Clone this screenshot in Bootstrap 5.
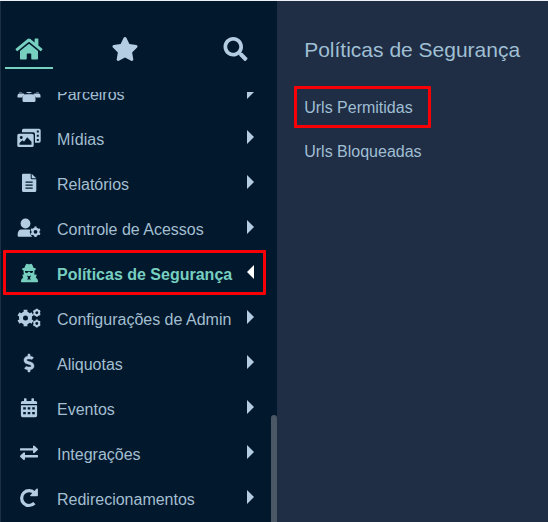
<!DOCTYPE html>
<html lang="pt-BR">
<head>
<meta charset="utf-8">
<meta name="viewport" content="width=device-width, initial-scale=1">
<title>Políticas de Segurança</title>
<link href="https://cdn.jsdelivr.net/npm/bootstrap@5.3.0/dist/css/bootstrap.min.css" rel="stylesheet">
<style>
  :root { --ink: #b5cde3; --teal: #77cfc0; --night: #02182c; --slate: #1f2d45; --alert: #f80006; }
  body { font-family: "Liberation Sans", Arial, sans-serif; font-size: 16px; line-height: 20px; color: #a3bfd1; background: var(--slate); border-top: 1px solid #eef1f4; }
  .side { flex: 0 0 277px; background: var(--night); border-left: 1px solid #1c2f45; }
  .tabs { height: 91px; padding: 25px 18px 0 4px; }
  .tab-btn { width: 48px; height: 43px; padding: 0; border: 0; border-bottom: 2px solid transparent; background: none; color: var(--ink); }
  .tab-btn.on { color: var(--teal); border-color: var(--teal); }
  .tab-btn svg { display: block; margin: 4px auto 0; height: 24px; }
  .scroller { min-height: 0; }
  .menu { margin-top: -22px; padding: 0 11px 0 2px; }
  .menu-btn { height: 45px; padding: 0 12px 0 13px; gap: 15px; border: 0; background: none; color: inherit; white-space: nowrap; }
  .menu-btn > svg { flex: none; width: 26px; height: 20px; color: var(--ink); }
  .menu-btn.on { color: var(--teal); font-weight: 700; outline: 3px solid var(--alert); outline-offset: -3px; border-radius: 1px; }
  .menu-btn.on > svg { color: var(--teal); }
  .tri { flex: none; border: solid transparent; border-width: 7px 0 7px 7px; border-left-color: var(--ink); margin-bottom: 2px; }
  .menu-btn.on .tri { border-width: 7px 7px 7px 0; border-right-color: #fff; }
  .thumb { width: 6px; top: 323px; right: 0; background: #4a5866; border-radius: 3px 3px 0 0; }
  .panel { padding: 34px 17px; color: #9fbfd3; }
  .panel h1 { font-size: 21px; line-height: 30px; margin: 0 0 21px 10px; }
  .sub { padding: 9px 15px 7px 7px; border: 3px solid transparent; color: inherit; text-decoration: none; border-radius: 1px; margin-bottom: 2px; }
  .sub.on { border-color: var(--alert); }
</style>
<script src="https://cdn.jsdelivr.net/npm/bootstrap@5.3.0/dist/js/bootstrap.bundle.min.js"></script>
</head>
<body>
<div class="d-flex vh-100 overflow-hidden">
  <aside class="side d-flex flex-column">
    <div class="tabs d-flex flex-shrink-0">
      <button class="tab-btn on" type="button" aria-label="Início"><svg viewBox="0 0 576 512" width="28" fill="currentColor"><path d="M280.37 148.26L96 300.11V464a16 16 0 0 0 16 16l112.06-.29a16 16 0 0 0 15.92-16V368a16 16 0 0 1 16-16h64a16 16 0 0 1 16 16v95.64a16 16 0 0 0 16 16.05L464 480a16 16 0 0 0 16-16V300L295.67 148.26a12.19 12.19 0 0 0-15.3 0zM571.6 251.47L488 182.56V44.05a12 12 0 0 0-12-12h-56a12 12 0 0 0-12 12v72.61L318.47 43a48 48 0 0 0-61 0L4.34 251.47a12 12 0 0 0-1.6 16.9l25.5 31A12 12 0 0 0 45.15 301l235.22-193.74a12.19 12.19 0 0 1 15.3 0L530.9 301a12 12 0 0 0 16.9-1.6l25.5-31a12 12 0 0 0-1.7-16.93z"/></svg></button>
      <button class="tab-btn ms-5" type="button" aria-label="Favoritos"><svg viewBox="0 0 576 512" width="28" fill="currentColor"><path d="M259.3 17.8L194 150.2 47.9 171.5c-26.2 3.8-36.7 36.1-17.7 54.6l105.7 103-25 145.5c-4.5 26.3 23.2 46 46.4 33.7L288 439.6l130.7 68.7c23.2 12.2 50.9-7.4 46.4-33.7l-25-145.5 105.7-103c19-18.5 8.5-50.8-17.7-54.6L382 150.2 316.7 17.8c-11.7-23.6-45.6-23.9-57.4 0z"/></svg></button>
      <button class="tab-btn ms-auto" type="button" aria-label="Buscar"><svg viewBox="0 0 512 512" width="25" fill="currentColor"><path d="M505 442.7L405.3 343c-4.5-4.5-10.6-7-17-7H372c27.6-35.3 44-79.7 44-128C416 93.1 322.9 0 208 0S0 93.1 0 208s93.1 208 208 208c48.3 0 92.7-16.4 128-44v16.3c0 6.4 2.5 12.5 7 17l99.7 99.7c9.4 9.4 24.6 9.4 33.9 0l28.3-28.3c9.4-9.4 9.4-24.6.1-34zM208 336c-70.7 0-128-57.2-128-128 0-70.7 57.2-128 128-128 70.7 0 128 57.2 128 128 0 70.7-57.2 128-128 128z"/></svg></button>
    </div>
    <nav class="scroller flex-grow-1 overflow-hidden position-relative" aria-label="Menu">
      <ul class="menu list-unstyled mb-0">
        <li><button class="menu-btn w-100 d-flex align-items-center" type="button"><svg viewBox="0 0 26 20" fill="currentColor"><circle cx="4.500" cy="7" r="2.500"/><circle cx="21.500" cy="7" r="2.500"/><circle cx="13" cy="6" r="4.300"/><path d="M1.500 14.500v-2q0-2 2-2h3.500q1.200 0 1.700.7Q6.500 12.500 6.200 14.500zM24.500 14.500v-2q0-2-2-2H19q-1.200 0-1.700.7 2.200 1.300 2.500 3.300zM6.500 17v-1.500q0-4.300 4-4.300h5q4 0 4 4.300V17.700q0 1.300-1.300 1.300H7.800Q6.500 19 6.500 17.700z"/></svg><span class="pt-1 me-auto">Parceiros</span><i class="tri"></i></button></li>
        <li><button class="menu-btn w-100 d-flex align-items-center" type="button"><svg viewBox="0 0 26 20" fill="currentColor" fill-rule="evenodd"><path d="M7.500 0.800h15.500q1.700 0 1.700 1.700v10.500q0 1.700-1.700 1.700h-4V6q0-1.700-1.700-1.700H6V2.300Q6 .8 7.500.8zM20.800 2.600v2h2v-2zm0 4.200v2h2v-2zm0 4.200v2h2v-2z"/><path d="M3 5.700h13q1.700 0 1.700 1.700v10q0 1.700-1.700 1.700H3q-1.700 0-1.700-1.700v-10Q1.300 5.700 3 5.700zM5.200 8a1.500 1.500 0 1 0 .1 0zM3.500 16.800h12v-3l-4.300-4.600L8 13.700l-1.500-1.500-3 2.800z"/></svg><span class="pt-1 me-auto">Mídias</span><i class="tri"></i></button></li>
        <li><button class="menu-btn w-100 d-flex align-items-center" type="button"><svg viewBox="0 0 26 20" fill="currentColor" fill-rule="evenodd"><path d="M7 .8h7.700V5q0 1.300 1.200 1.300h4.400V17.500q0 1.500-1.500 1.500H7.500Q6 19 6 17.500V2Q6 .8 7 .8zM9.500 8.400v1.400h7.200V8.400zm0 3v1.400h7.200v-1.400zm0 3v1.400h7.200v-1.400zM15.700 .8l4.600 4.500h-4.600z"/></svg><span class="pt-1 me-auto">Relatórios</span><i class="tri"></i></button></li>
        <li><button class="menu-btn w-100 d-flex align-items-center" type="button"><svg viewBox="0 0 26 20" fill="currentColor"><circle cx="9.500" cy="5.500" r="4.900"/><path d="M5.500 11.500h7.500q1.300 0 1.300.5-1.300 2.200.2 4.500.8 1.500 1.800 2.300H3Q1.600 18.800 1.600 17.300 1.600 11.500 5.500 11.500z"/><circle cx="19.500" cy="13.800" r="3" fill="none" stroke="currentColor" stroke-width="2.200"/><path d="M19.500 8.600v2M19.500 17v2M15 11.200l1.800 1M22.200 15.400l1.800 1M15 16.400l1.800-1M22.200 12.200l1.800-1" stroke="currentColor" stroke-width="2.200"/></svg><span class="pt-1 me-auto">Controle de Acessos</span><i class="tri"></i></button></li>
        <li><button class="menu-btn on w-100 d-flex align-items-center" type="button"><svg viewBox="0 0 26 20" fill="currentColor" fill-rule="evenodd"><path d="M10.300 .9q.8-.5 1.500 0 1.200.6 2.400 0 .7-.5 1.500 0 1.300 1.500 1.800 3.900 2.500.5 2.500 1.300 0 .8-1.500 1.300.1 3-.4 4h1.900q.8.200.6.900l-.8 2.200q2.300 1.300 2.300 4 0 .7-.8.700H5.700q-.8 0-.8-.7 0-2.700 2.300-4l-.8-2.200q-.2-.7.600-.9h1Q7.500 10.400 7.500 7.400 6 6.900 6 6.100q0-.8 2.500-1.300Q9 2.400 10.300.9zM9 8v.8q.3 1.200 1.600 1.200 1.300 0 1.700-1.200h1.400q.4 1.200 1.700 1.200 1.300 0 1.600-1.200V8zM10.800 12.600l1.200 2-.6 3 1.600-1.700 1.600 1.700-.6-3 1.200-2-2.200.7z"/></svg><span class="pt-1 me-auto">Políticas de Segurança</span><i class="tri"></i></button></li>
        <li><button class="menu-btn w-100 d-flex align-items-center" type="button"><svg viewBox="0 0 26 20" fill="none" stroke="currentColor"><circle cx="9.500" cy="10" r="4.500" stroke-width="4"/><path d="M9.500 1.800v2.500M9.500 15.700v2.500M2.500 5.900l2 1.200M14.500 12.900l2 1.200M2.500 14.100l2-1.200M14.500 7.100l2-1.200" stroke-width="3.800"/><g stroke-width="1.900"><circle cx="20.800" cy="4.700" r="2.400"/><circle cx="20.800" cy="15.500" r="2.400"/><path d="M20.800.7v1.500M20.800 7.200v1.500M17.400 2.700l1.300.8M22.900 5.900l1.300.8M17.400 6.700l1.300-.8M22.900 3.500l1.300-.8M20.800 11.500v1.500M20.800 18v1.500M17.400 13.500l1.300.8M22.900 16.700l1.300.8M17.400 17.500l1.300-.8M22.900 14.300l1.300-.8"/></g></svg><span class="pt-1 me-auto">Configurações de Admin</span><i class="tri"></i></button></li>
        <li><button class="menu-btn w-100 d-flex align-items-center" type="button"><svg viewBox="-224 -28 736 568" fill="currentColor" stroke="currentColor" stroke-width="12"><path d="M209.200 233.400l-108-31.600C88.700 198.200 80 186.500 80 173.500c0-16.300 13.200-29.500 29.500-29.500h66.300c12.200 0 24.200 3.700 34.200 10.500 6.100 4.100 14.300 3.100 19.500-2l34.800-34c7.100-6.900 6.100-18.400-1.800-24.500C238 74.800 207.400 64.100 176 64V16c0-8.800-7.200-16-16-16h-32c-8.800 0-16 7.200-16 16v48h-2.500C45.800 64-5.400 118.700.5 183.600c4.200 46.100 39.400 83.600 83.800 96.600l102.500 30c12.500 3.700 21.200 15.300 21.200 28.300 0 16.300-13.200 29.500-29.500 29.500h-66.300C100 368 88 364.300 78 357.500c-6.100-4.100-14.300-3.100-19.500 2l-34.800 34c-7.100 6.900-6.100 18.400 1.800 24.500 24.500 19.200 55.100 29.900 86.500 30v48c0 8.800 7.200 16 16 16h32c8.800 0 16-7.200 16-16v-48.200c46.600-.9 90.300-28.600 105.700-72.700 21.500-61.600-14.600-124.800-72.500-141.700z"/></svg><span class="pt-1 me-auto">Aliquotas</span><i class="tri"></i></button></li>
        <li><button class="menu-btn w-100 d-flex align-items-center" type="button"><svg viewBox="0 0 26 20" fill="currentColor" fill-rule="evenodd"><path d="M8 1q0-.7.700-.7h1.200q.7 0 .7.700v2h4.800V1q0-.7.700-.7h1.200q.7 0 .7.700v2h1.500q1.600 0 1.600 1.600v1.400H4.900V4.600Q4.900 3 6.500 3H8zM4.900 7.200h16.200v10.400q0 1.600-1.600 1.600h-13q-1.600 0-1.600-1.600zM7.200 9.300v2.200h2.600V9.300zm4.500 0v2.200h2.600V9.300zm4.500 0v2.200h2.600V9.300zM7.200 14v2.200h2.600V14zm4.500 0v2.200h2.600V14zm4.500 0v2.200h2.600V14z"/></svg><span class="pt-1 me-auto">Eventos</span><i class="tri"></i></button></li>
        <li><button class="menu-btn w-100 d-flex align-items-center" type="button"><svg viewBox="0 0 26 20" fill="currentColor"><path d="M4.600 5.200H17V3.300q.3-1.200 1.400-.6l3.300 3q.7.700 0 1.400l-3.300 3q-1.100.6-1.400-.6V7.600H4.600q-.6 0-.6-.6V5.800q0-.6.6-.6zM21.400 12H9v-1.900q-.3-1.200-1.400-.6l-3.300 3q-.7.700 0 1.400l3.300 3q1.100.6 1.400-.6v-1.900h12.400q.6 0 .6-.6v-1.200q0-.6-.6-.6z"/></svg><span class="pt-1 me-auto">Integrações</span><i class="tri"></i></button></li>
        <li><button class="menu-btn w-100 d-flex align-items-center" type="button"><svg viewBox="0 0 26 20"><path d="M18.600 5.200A7.400 7.400 0 1 0 18.400 15.200" fill="none" stroke="currentColor" stroke-width="3.200"/><path d="M21.900 1.400v6.100q0 .8-.8.800H15q-1.500-.2-.6-1.400l6.100-6.100q1.300-.8 1.400.6z" fill="currentColor"/></svg><span class="pt-1 me-auto">Redirecionamentos</span><i class="tri"></i></button></li>
      </ul>
      <div class="thumb position-absolute bottom-0"></div>
    </nav>
  </aside>
  <main class="panel flex-grow-1">
    <h1 class="fw-normal text-nowrap">Políticas de Segurança</h1>
    <nav class="d-flex flex-column align-items-start" aria-label="Políticas de Segurança">
      <a class="sub on" href="#">Urls Permitidas</a>
      <a class="sub" href="#">Urls Bloqueadas</a>
    </nav>
  </main>
</div>
</body>
</html>
